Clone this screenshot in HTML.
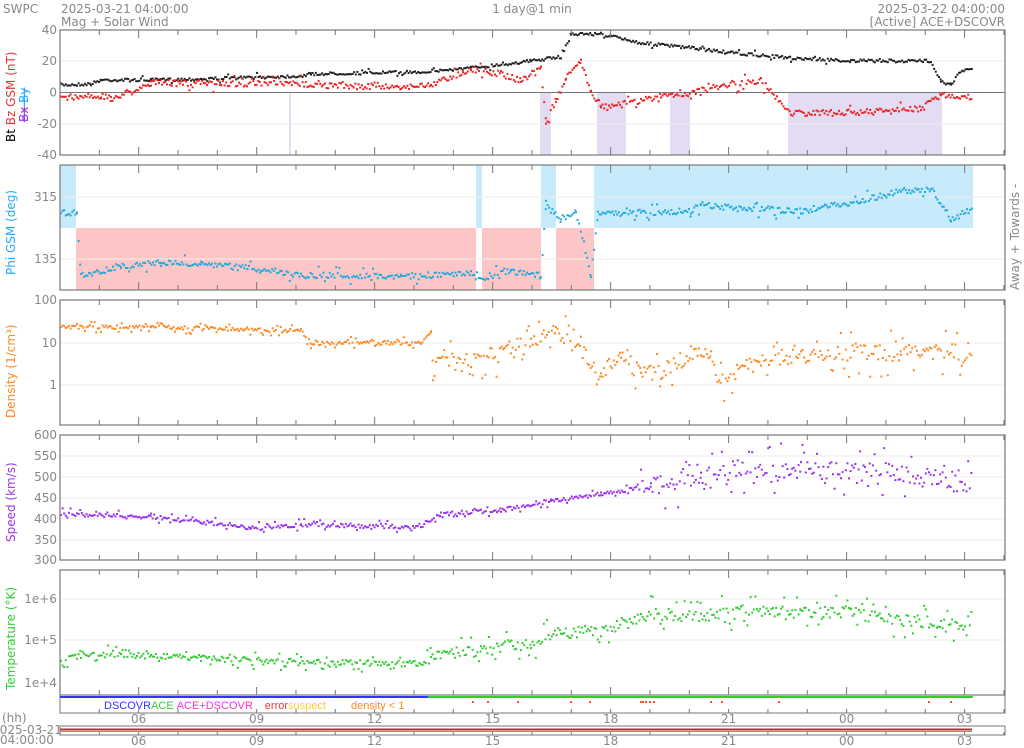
<!DOCTYPE html>
<html><head><meta charset="utf-8"><style>
body{margin:0;background:#fff;width:1024px;height:748px;overflow:hidden}
svg{display:block;font-family:"DejaVu Sans","Liberation Sans",sans-serif}
.t{fill:#888;font-size:12px}
</style></head><body>
<svg id="s" width="1024" height="748" xmlns="http://www.w3.org/2000/svg">
<text x="3" y="13" class="t" font-size="14">SWPC</text>
<text x="61" y="13" class="t" font-size="15">2025-03-21 04:00:00</text>
<text x="61" y="26" class="t" font-size="15">Mag + Solar Wind</text>
<text x="532" y="13" class="t" font-size="14" text-anchor="middle">1 day@1 min</text>
<text x="1005" y="13" class="t" font-size="15" text-anchor="end">2025-03-22 04:00:00</text>
<text x="1005" y="26" class="t" font-size="15" text-anchor="end">[Active] ACE+DSCOVR</text>
<g id="bg"></g><g id="d"></g><g id="fr"></g>
<text transform="translate(15,142) rotate(-90)" font-size="12"><tspan fill="#000">Bt </tspan><tspan fill="#e33"> Bz GSM (nT)</tspan></text>
<text transform="translate(28,122) rotate(-90)" font-size="12"><tspan fill="#93e" text-decoration="line-through">Bx</tspan><tspan fill="#2af" text-decoration="line-through"> By</tspan></text>
<text transform="translate(15,275) rotate(-90)" font-size="12" fill="#2af">Phi GSM (deg)</text>
<text transform="translate(1019,290) rotate(-90)" font-size="12" fill="#888">Away +  Towards -</text>
<text transform="translate(15,418) rotate(-90)" font-size="12" fill="#f82">Density (1/cm³)</text>
<text transform="translate(15,542) rotate(-90)" font-size="12" fill="#93e">Speed (km/s)</text>
<text transform="translate(15,690) rotate(-90)" font-size="12" fill="#3c3">Temperature (°K)</text>
<text y="709" font-size="11" font-family="Liberation Sans, sans-serif"><tspan x="104" fill="#33f">DSCOVR</tspan><tspan fill="#3c3">ACE</tspan><tspan fill="#f3c" dx="3">ACE+DSCOVR</tspan><tspan fill="#f33" dx="12">error</tspan><tspan fill="#fc3">suspect</tspan><tspan fill="#f82" dx="25">density &lt; 1</tspan></text>
<text x="2" y="722" class="t">(hh)</text>
<text x="27" y="734" class="t" text-anchor="middle" font-size="11">2025-03-21</text>
<text x="27" y="744" class="t" text-anchor="middle" font-size="11">04:00:00</text>
</svg>
<script>
var NS="http://www.w3.org/2000/svg",bg=document.getElementById('bg'),d=document.getElementById('d'),fr=document.getElementById('fr');
function el(p,t,a){var e=document.createElementNS(NS,t);for(var k in a)e.setAttribute(k,a[k]);p.appendChild(e);return e}
var seed=7;function r(){seed=(seed*16807)%2147483647;return seed/2147483647}
function X(h){return 60+(h-4)*39.33}
var P=[[30,155],[165,290],[300,425],[435,560],[570,695]];
function rect(x1,x2,y1,y2,c){el(bg,'rect',{x:x1,y:y1,width:x2-x1,height:y2-y1,fill:c})}
[[540,551],[597,626],[670,690],[788,942],[289,291]].forEach(function(a){rect(a[0],a[1],92,155,'#e4dcf2')});
[[60,76],[541,556],[594,973],[476,482]].forEach(function(a){rect(a[0],a[1],165,228,'#c8ebfb')});
[[76,476],[482,541],[556,594]].forEach(function(a){rect(a[0],a[1],228,290,'#fcc6c6')});
function hl(y,c){el(bg,'line',{x1:60,x2:1005,y1:y,y2:y,stroke:c||'#eee','stroke-width':1})}
[61,124].forEach(function(y){hl(y)});hl(92.5,'#777');hl(197);hl(259);hl(343);hl(385);
[456,477,498,519,540].forEach(function(y){hl(y)});hl(599);hl(640);
function series(pts,noise,col,step,sc,m){for(var i=0;i<pts.length-1;i++){var a=pts[i],b=pts[i+1];for(var x=a[0];x<b[0];x+=step){var y=a[1]+(b[1]-a[1])*(x-a[0])/(b[0]-a[0]);var nz=(m&&x>m[0])?m[1]:noise;var n=(r()-.5)*2*nz;if(sc&&r()<sc)n*=3;el(d,'rect',{x:x.toFixed(1),y:(y+n).toFixed(1),width:2,height:2,fill:col})}}}
series([[60,84],[90,83],[100,79],[150,79],[200,78],[300,75],[310,73],[420,71],[470,67],[530,60],[560,56],[570,33],[600,33],[640,42],[700,48],[730,52],[790,57],[850,60],[930,60],[940,80],[950,84],[958,72],[972,67]],1.5,'#222',1.6,0.05);
series([[60,96],[100,95],[110,98],[150,82],[300,83],[340,85],[400,86],[430,84],[470,68],[500,73],[520,80],[540,66],[545,122],[555,100],[565,78],[580,60],[590,90],[600,105],[640,100],[660,95],[690,92],[720,85],[760,80],[790,112],[850,112],[920,108],[940,94],[972,96]],3,'#e22',1.6,0.12);
series([[60,212],[76,212],[80,275],[120,265],[160,262],[200,264],[260,268],[300,274],[400,275],[470,273],[476,278],[510,270],[540,275],[545,205],[560,218],[575,210],[590,275],[597,212],[640,212],[690,210],[700,204],[740,208],[800,210],[860,200],[900,190],[930,188],[950,218],[972,208]],3,'#2ad',1.6,0.1);
series([[60,326],[150,326],[300,330],[310,342],[420,342],[430,330],[432,360],[470,360],[510,350],[530,345],[555,330],[580,350],[600,375],[620,350],[640,370],[660,372],[690,353],[710,356],[720,378],[760,360],[800,355],[850,352],[900,352],[940,350],[972,353]],2,'#f82',1.6,0.3,[430,8]);
series([[60,513],[150,516],[200,521],[250,527],[300,524],[420,526],[440,513],[500,509],[550,500],[600,493],[650,485],[700,476],[740,468],[800,470],[880,470],[940,478],[972,487]],2,'#93e',1.6,0.3,[640,9]);
series([[60,661],[80,652],[150,655],[200,657],[300,661],[420,663],[430,655],[480,650],[530,642],[560,632],[600,630],[650,613],[700,615],[740,610],[800,612],[850,610],[880,618],[940,622],[972,628]],3,'#3c3',1.6,0.3,[430,6]);
P.forEach(function(p){el(fr,'rect',{x:60,y:p[0],width:945,height:p[1]-p[0],fill:'none',stroke:'#777','stroke-width':1.2});
 for(var h=4;h<=28;h++){var x=X(h),l=(h%3==0)?8:5;el(fr,'line',{x1:x,x2:x,y1:p[0],y2:p[0]+l,stroke:'#777'});el(fr,'line',{x1:x,x2:x,y1:p[1],y2:p[1]-l,stroke:'#777'})}});
el(fr,'rect',{x:60,y:695,width:945,height:18,fill:'none',stroke:'#777'});
el(fr,'line',{x1:60,x2:428,y1:697,y2:697,stroke:'#33f','stroke-width':2});
el(fr,'line',{x1:428,x2:973,y1:697,y2:697,stroke:'#3c3','stroke-width':2});
[472,487,517,570,589,640,642,645,649,653,710,721,778,928,950].forEach(function(x){el(fr,'rect',{x:x,y:701,width:2,height:2,fill:'#f52'})});
el(fr,'rect',{x:60,y:726,width:945,height:9,fill:'none',stroke:'#777'});
el(fr,'line',{x1:60,x2:972,y1:729.5,y2:729.5,stroke:'#a33','stroke-width':2});
el(fr,'line',{x1:60,x2:972,y1:731.5,y2:731.5,stroke:'#b86','stroke-width':1});
for(var h=4;h<=28;h++){var x=X(h);el(fr,'line',{x1:x,x2:x,y1:713,y2:709,stroke:'#777'});el(fr,'line',{x1:x,x2:x,y1:735,y2:732,stroke:'#777'})}
['06','09','12','15','18','21','00','03'].forEach(function(t,i){var x=X(6+3*i);[723,745].forEach(function(y){var e=el(fr,'text',{x:x,y:y,'text-anchor':'middle','font-size':12,fill:'#888'});e.textContent=t})});
function yl(y,t){var e=el(fr,'text',{x:57,y:y+4,'text-anchor':'end','font-size':12,fill:'#888'});e.textContent=t}
yl(30,'40');yl(61,'20');yl(92.5,'0');yl(124,'-20');yl(155,'-40');
yl(197,'315');yl(259,'135');
yl(300,'100');yl(343,'10');yl(385,'1');
[[435,600],[456,550],[477,500],[498,450],[519,400],[540,350],[560,300]].forEach(function(a){yl(a[0],a[1])});
yl(599,'1e+6');yl(640,'1e+5');yl(683,'1e+4');
</script>
</body></html>
